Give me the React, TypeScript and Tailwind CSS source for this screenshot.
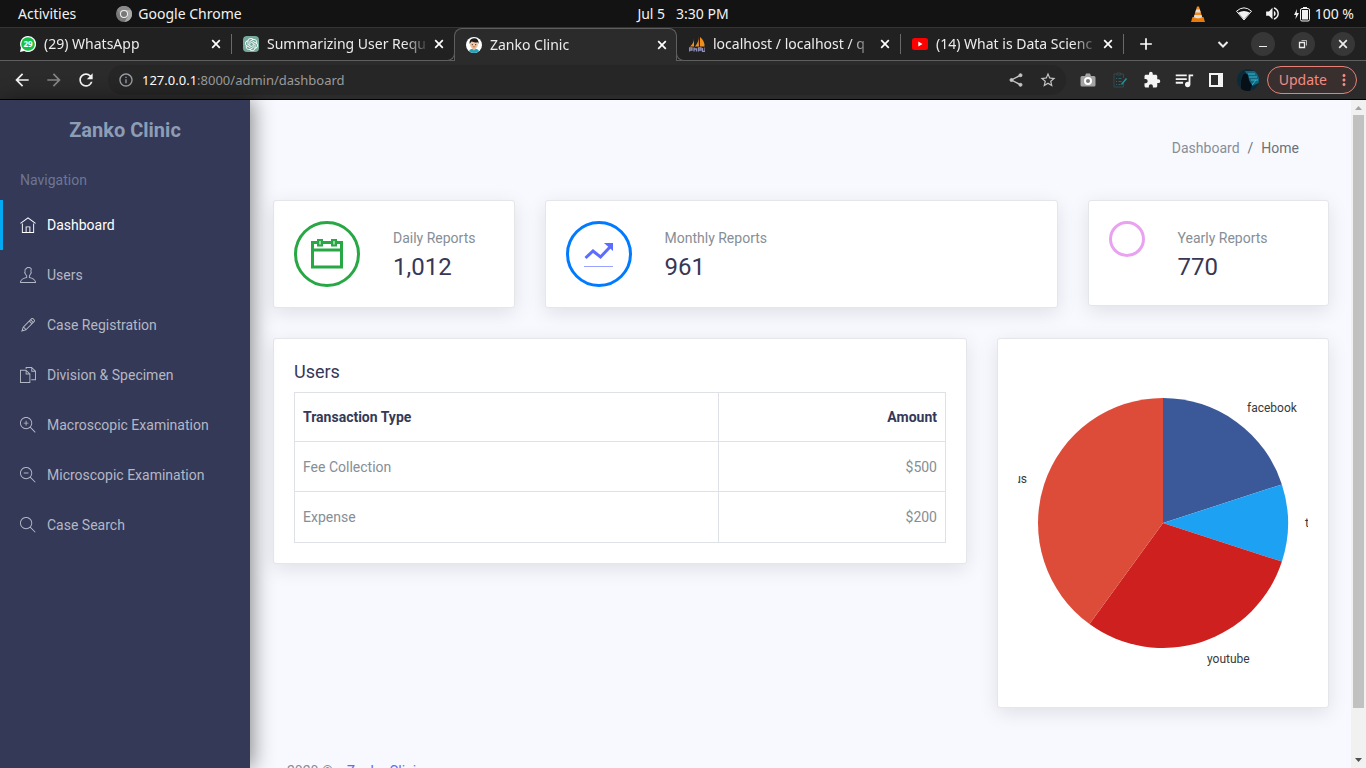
import type { ReactNode } from "react";
import {
  MdArrowBack,
  MdArrowForward,
  MdRefresh,
  MdInfoOutline,
  MdStarBorder,
  MdExtension,
  MdQueueMusic,
  MdMoreVert,
  MdAdd,
  MdVolumeUp,
} from "react-icons/md";
import { TfiHome, TfiUser, TfiPencil, TfiFiles, TfiZoomIn, TfiZoomOut, TfiSearch } from "react-icons/tfi";
import { SiOpenai } from "react-icons/si";

function ChromeIcon() {
  return (
    <svg viewBox="0 0 16 16" className="size-4" aria-hidden="true">
      <circle cx="8" cy="8" r="8" fill="#777" />
      <path d="M8 4h7A8 8 0 0 1 8.500 16L12 10z" fill="#a9a9a9" />
      <path d="M1 4a8 8 0 0 1 14 0H8L4.500 10z" fill="#8a8a8a" />
      <circle cx="8" cy="8" r="4" fill="#f0f0f0" />
      <circle cx="8" cy="8" r="3" fill="#777" />
    </svg>
  );
}

function VlcIcon() {
  return (
    <svg viewBox="0 0 16 16" className="size-4" aria-hidden="true">
      <path d="M2.500 11h11l1.500 5H1z" fill="#e87a05" />
      <path d="M7 .5h2l3.500 11.500q-4.500 2-9 0z" fill="#f08a1a" />
      <path d="M6.200 3.500h3.600l.9 3H5.300zM4.500 9h7l.7 2.300q-4.200 1.700-8.400 0z" fill="#dedede" />
    </svg>
  );
}

function BatteryIcon() {
  return (
    <svg viewBox="0 0 18 16" className="h-4 w-[18px]" aria-hidden="true">
      <path d="M4 3 1 9h2l-.5 4L6 7H3.700z" fill="#f2f2f2" />
      <rect x="7.500" y="2.500" width="9" height="12.500" rx="1.500" fill="none" stroke="#f2f2f2" />
      <rect x="10" y="1" width="4" height="2" fill="#f2f2f2" />
      <rect x="9" y="4" width="6" height="9.500" fill="#f2f2f2" />
    </svg>
  );
}

function WifiIcon() {
  return (
    <svg viewBox="0 0 16 16" className="size-4" aria-hidden="true">
      <path d="M.5 5.200Q8-1.500 15.500 5.200L8 14z" fill="none" stroke="#f2f2f2" />
      <path d="M2.300 6.500Q8 3.500 13.700 6.500L8 13.500z" fill="#f2f2f2" />
    </svg>
  );
}

function CrossIcon() {
  return (
    <svg viewBox="0 0 10 10" className="size-2.5" fill="none" stroke="currentColor" strokeWidth="1.700" aria-hidden="true">
      <path d="m1.200 1.200 7.600 7.600M8.800 1.200 1.200 8.800" />
    </svg>
  );
}

function WhatsAppIcon() {
  return (
    <svg viewBox="0 0 16 16" className="size-4" aria-hidden="true">
      <path d="M8 0a8 8 0 1 1-3.800 15L0 16l1-4.200A8 8 0 0 1 8 0z" fill="#fff" />
      <circle cx="8" cy="8" r="6.800" fill="#12c145" />
      <text x="8" y="10.800" textAnchor="middle" fontSize="8" fontWeight="700" fill="#fff" fontFamily="Noto Sans, sans-serif">
        29
      </text>
    </svg>
  );
}

function ChatIcon() {
  return (
    <span className="flex size-4 items-center justify-center rounded-sm bg-[#74a99b] text-white">
      <SiOpenai size={13} />
    </span>
  );
}

function DoctorIcon() {
  return (
    <svg viewBox="0 0 16 16" className="size-4" aria-hidden="true">
      <circle cx="8" cy="8" r="8" fill="#fff" />
      <path d="M3 14q1-2.500 5-2.500t5 2.500q-2 2-5 2t-5-2z" fill="#1ba6be" />
      <path d="M6.500 10h3v2.500L8 13.500l-1.500-1z" fill="#e9ac84" />
      <ellipse cx="8" cy="7.500" rx="4" ry="4.300" fill="#f3c6a0" />
      <path d="M3.500 7Q3 1.500 8 1.300q5-.1 4.600 5.700l-1-1.800q-3.500.6-6-.6z" fill="#1d1d1d" />
      <circle cx="6.300" cy="7.700" r=".6" fill="#333" />
      <circle cx="9.700" cy="7.700" r=".6" fill="#333" />
      <path d="M6.700 9.800h2.600" stroke="#9c4c35" strokeWidth=".7" />
    </svg>
  );
}

function PhpMyAdminIcon() {
  return (
    <svg viewBox="0 0 16 16" className="size-4" aria-hidden="true">
      <path d="M5 2.500Q5 7 1 10.500h4zM9.500 0Q10 6 6 10.500h4zM11 1q5 4 4.500 9.500H11z" fill="#f18e1c" />
      <path
        d="M.5 15.500V12H3v2H.5M5 15.500V11.500M5 13h2.500v2.500M9.500 15.500V12h2.500v2H9.500M13.500 12v3.500H16V11.500"
        fill="none"
        stroke="#8f8fb8"
        strokeWidth="1.300"
      />
    </svg>
  );
}

function YouTubeIcon() {
  return (
    <svg viewBox="0 0 16 16" className="size-4" aria-hidden="true">
      <rect y="2" width="16" height="12" rx="2.500" fill="#f00" />
      <path d="M6.300 5.600v4.800L10.500 8z" fill="#fff" />
    </svg>
  );
}

type Tab = { title: string; icon: ReactNode; active?: boolean };

const tabs: Tab[] = [
  { title: "(29) WhatsApp", icon: <WhatsAppIcon /> },
  { title: "Summarizing User Requ", icon: <ChatIcon /> },
  { title: "Zanko Clinic", icon: <DoctorIcon />, active: true },
  { title: "localhost / localhost / q", icon: <PhpMyAdminIcon /> },
  { title: "(14) What is Data Scienc", icon: <YouTubeIcon /> },
];

function SystemBar() {
  return (
    <header className="grid h-7 shrink-0 grid-cols-[1fr_auto_1fr] items-center border-b border-[#343434] bg-[#131313] text-[#f2f2f2]">
      <div className="flex items-center gap-10 pl-[18px]">
        <button type="button">Activities</button>
        <button type="button" className="flex items-center gap-1.5">
          <ChromeIcon />
          Google Chrome
        </button>
      </div>
      <button type="button" className="whitespace-pre">
        Jul 5   3:30 PM
      </button>
      <div className="flex items-center justify-end gap-3 pr-3">
        <span className="mr-[18px]">
          <VlcIcon />
        </span>
        <WifiIcon />
        <MdVolumeUp size={17} />
        <span className="flex items-center gap-1">
          <BatteryIcon />
          100 %
        </span>
      </div>
    </header>
  );
}

function TabItem({ tab, divided }: { tab: Tab; divided: boolean }) {
  const frame = tab.active
    ? "z-10 rounded-t-lg border-x border-t border-[#5f5f5f] bg-[#2b2b2b] pl-[11px] pr-[9px]"
    : "border-b border-[#5f5f5f] pl-3 pr-2.5";
  return (
    <div className={`relative flex w-[223px] items-center ${frame}`}>
      {divided && <span className="absolute left-0 top-1.5 h-5 w-px bg-[#6a6a6a]" />}
      {tab.active && (
        <>
          <span className="absolute -left-2 bottom-0 size-2 rounded-br-lg border-b border-r border-[#5f5f5f] bg-[#212121]" />
          <span className="absolute -right-2 bottom-0 size-2 rounded-bl-lg border-b border-l border-[#5f5f5f] bg-[#212121]" />
        </>
      )}
      {tab.icon}
      <span className="ml-2 flex-1 overflow-hidden whitespace-nowrap [mask-image:linear-gradient(to_right,black_84%,transparent)]">
        {tab.title}
      </span>
      <button type="button" aria-label={`Close ${tab.title}`} className="ml-1 text-white">
        <CrossIcon />
      </button>
    </div>
  );
}

function TabStrip() {
  return (
    <div className="flex h-[33px] shrink-0 bg-[#212121] text-[#ececec]">
      <div className="w-2 border-b border-[#5f5f5f]" />
      {tabs.map((tab, i) => (
        <TabItem key={tab.title} tab={tab} divided={i === 1 || i === 4} />
      ))}
      <div className="flex flex-1 items-center border-b border-[#5f5f5f] pr-[11px]">
        <span className="h-5 w-px bg-[#6a6a6a]" />
        <button type="button" aria-label="New tab" className="ml-3 text-white">
          <MdAdd size={20} />
        </button>
        <div className="ml-auto flex items-center gap-4">
          <button type="button" aria-label="Search tabs" className="flex size-6 items-center justify-center">
            <svg viewBox="0 0 12 12" className="size-3" fill="none" stroke="currentColor" strokeWidth="2">
              <path d="M1.500 4 6 8.500 10.500 4" />
            </svg>
          </button>
          <button type="button" aria-label="Minimize" className="flex size-6 items-center justify-center rounded-full bg-[#373737]">
            <svg viewBox="0 0 12 12" className="size-3" stroke="currentColor">
              <path d="M2 8.500h8" />
            </svg>
          </button>
          <button type="button" aria-label="Restore" className="flex size-6 items-center justify-center rounded-full bg-[#373737]">
            <svg viewBox="0 0 12 12" className="size-3" fill="none" stroke="currentColor">
              <path d="M2.500 4.500h5v5h-5z" strokeWidth="1.300" />
              <path d="M4.500 2.500h5v5" opacity=".7" />
            </svg>
          </button>
          <button type="button" aria-label="Close window" className="flex size-6 items-center justify-center rounded-full bg-[#373737]">
            <CrossIcon />
          </button>
        </div>
      </div>
    </div>
  );
}

function ToolButton({ label, children }: { label: string; children: ReactNode }) {
  return (
    <button type="button" aria-label={label} className="flex size-8 shrink-0 items-center justify-center">
      {children}
    </button>
  );
}

function Toolbar() {
  return (
    <div className="flex h-[39px] shrink-0 items-center border-b border-black bg-[#2b2b2b] pl-1.5 pr-[9px] text-[#f4f4f4]">
      <ToolButton label="Back">
        <MdArrowBack size={20} />
      </ToolButton>
      <ToolButton label="Forward">
        <MdArrowForward size={20} className="text-[#858585]" />
      </ToolButton>
      <ToolButton label="Reload">
        <MdRefresh size={20} />
      </ToolButton>
      <div className="ml-1.5 mr-1.5 flex h-[30px] flex-1 items-center rounded-full bg-[#262626] pl-2.5 pr-0.5 text-[#c4c4c4]">
        <MdInfoOutline size={16} className="text-[#9aa0a6]" />
        <a href="#address" className="ml-2 flex-1 text-[13px] text-[#9b9b9b]">
          <span className="text-white">127.0.0.1</span>:8000/admin/dashboard
        </a>
        <ToolButton label="Share">
          <svg viewBox="0 0 14 14" className="size-3.5" fill="currentColor" stroke="currentColor">
            <path d="M11.500 2.200 2.500 7l9 4.800" fill="none" strokeWidth="1.400" />
            <circle cx="11.500" cy="2.200" r="1.500" />
            <circle cx="2.500" cy="7" r="1.500" />
            <circle cx="11.500" cy="11.800" r="1.500" />
          </svg>
        </ToolButton>
        <ToolButton label="Bookmark">
          <MdStarBorder size={18} />
        </ToolButton>
      </div>
      <ToolButton label="Screenshot">
        <svg viewBox="0 0 16 14" className="h-3.5 w-4">
          <path d="M2 3h3l1-2.500h4L11 3h3q1.500 0 1.500 1.500v7.500q0 1.500-1.500 1.500H2Q.5 13.500.5 12V4.500Q.5 3 2 3z" fill="#a3a3a3" />
          <circle cx="8" cy="8" r="3" fill="#777" stroke="#fff" strokeWidth="2" />
        </svg>
      </ToolButton>
      <ToolButton label="Tasks">
        <svg viewBox="0 0 16 16" className="size-4" fill="none">
          <path d="M5 2H2v13h9.500V11M11.500 6V2h-3M5 1h3.500v2H5z" stroke="#35494d" />
          <path d="M4 6.500h1M6.500 6.500h3M4 9.500h1M6.500 9.500h3M4 12.500h1M6.500 12.500h2" stroke="#2b6468" />
          <path d="m9.500 12.500 5-6" stroke="#18959b" strokeWidth="1.500" />
        </svg>
      </ToolButton>
      <ToolButton label="Extensions">
        <MdExtension size={18} />
      </ToolButton>
      <ToolButton label="Media">
        <MdQueueMusic size={22} />
      </ToolButton>
      <ToolButton label="Side panel">
        <svg viewBox="0 0 14 14" className="size-3.5" fill="#f4f4f4">
          <path fillRule="evenodd" d="M0 0h14v14H0zM2 2v10h7V2z" />
        </svg>
      </ToolButton>
      <ToolButton label="Profile">
        <svg viewBox="0 0 22 22" className="size-[22px] rounded-full">
          <rect width="22" height="22" fill="#0c2a38" />
          <path d="M8 2h14v12l-7 3z" fill="#14667d" />
          <path d="M11 5h7M12 8h8M14 11h7M15 16l4-5" stroke="#38b4cf" />
          <path d="M4 22V12l2-6q3-3 5 0l1 6 3 4-2 6z" fill="#070f17" />
        </svg>
      </ToolButton>
      <button
        type="button"
        className="ml-[3px] flex h-7 items-center gap-2 rounded-full border border-[#e88076] bg-[#3a2f2f] pl-[11px] pr-[3px] text-[#f28b82]"
      >
        Update
        <MdMoreVert size={18} />
      </button>
    </div>
  );
}

const navItems = [
  { label: "Dashboard", icon: TfiHome, active: true },
  { label: "Users", icon: TfiUser },
  { label: "Case Registration", icon: TfiPencil },
  { label: "Division & Specimen", icon: TfiFiles },
  { label: "Macroscopic Examination", icon: TfiZoomIn },
  { label: "Microscopic Examination", icon: TfiZoomOut },
  { label: "Case Search", icon: TfiSearch },
];

function Sidebar() {
  return (
    <aside className="z-10 w-[250px] shrink-0 bg-[#343957] shadow-[3px_0_20px_rgba(0,0,0,0.45)]">
      <h1 className="pt-[15px] text-center text-xl leading-[30px] font-bold text-[#8d9db6]">Zanko Clinic</h1>
      <p className="px-5 pt-[25px] pb-[10px] leading-5 text-[#6d7693]">Navigation</p>
      <nav>
        {navItems.map(({ label, icon: Icon, active }) => (
          <a
            key={label}
            href="#nav"
            className={`flex h-[50px] items-center gap-[11px] border-l-[3px] pl-[17px] ${
              active ? "border-[#03a9f3] text-white" : "border-transparent text-[#b4b7c4]"
            }`}
          >
            <Icon size={16} />
            {label}
          </a>
        ))}
      </nav>
    </aside>
  );
}

function Card({ className, children }: { className: string; children: ReactNode }) {
  return (
    <section
      className={`rounded-[3px] border border-[#e5e6ea] bg-white p-5 shadow-[0_5px_20px_rgba(0,0,0,0.1)] ${className}`}
    >
      {children}
    </section>
  );
}

function StatCard({ className, label, value, children }: { className: string; label: string; value: string; children: ReactNode }) {
  return (
    <Card className={className}>
      <div className="flex items-start gap-[33px]">
        {children}
        <div className="pt-1 pb-0.5">
          <p className="leading-[26px] text-[#868e96]">{label}</p>
          <p className="text-2xl leading-8 text-[#373757]">{value}</p>
        </div>
      </div>
    </Card>
  );
}

function PieChart() {
  return (
    <svg viewBox="0 0 290 328" className="block w-full" fontSize="12" fill="#373a3c" role="img" aria-label="Traffic sources">
      <path d="M145 164V39A125 125 0 0 1 263.900 125.400z" fill="#3b5998" />
      <path d="M145 164 263.900 125.400A125 125 0 0 1 263.900 202.600z" fill="#1da1f2" />
      <path d="M145 164 263.900 202.600A125 125 0 0 1 71.500 265.100z" fill="#cd201f" />
      <path d="M145 164 71.500 265.100A125 125 0 0 1 145 39z" fill="#dd4b39" />
      <text x="229" y="53">facebook</text>
      <text x="287" y="168">twitter</text>
      <text x="189" y="304">youtube</text>
      <text x="9" y="124" textAnchor="end">google plus</text>
    </svg>
  );
}

const cell = "border border-[#dee2e6] px-2";

function UsersTable() {
  return (
    <table className="w-full table-fixed border-collapse">
      <thead>
        <tr className="h-[49px] text-[#343957]">
          <th className={`w-[65.2%] text-left font-bold ${cell}`}>Transaction Type</th>
          <th className={`text-right font-bold ${cell}`}>Amount</th>
        </tr>
      </thead>
      <tbody className="text-[#868e96]">
        <tr className="h-[50px]">
          <td className={cell}>Fee Collection</td>
          <td className={`text-right ${cell}`}>$500</td>
        </tr>
        <tr className="h-[51px]">
          <td className={cell}>Expense</td>
          <td className={`text-right ${cell}`}>$200</td>
        </tr>
      </tbody>
    </table>
  );
}

function Dashboard() {
  return (
    <main className="min-w-0 flex-1 overflow-hidden bg-[#f8f9fe] pl-[23px] pr-[22px]">
      <nav aria-label="Breadcrumb" className="flex justify-end gap-2 pt-9 pr-[30px] pb-10 leading-6">
        <a href="#dashboard" className="text-[#868e96]">
          Dashboard
        </a>
        <span className="text-[#6c757d]">/</span>
        <span className="text-[#6b7178]">Home</span>
      </nav>
      <div className="grid grid-cols-12 items-start gap-[30px]">
        <StatCard className="col-span-3" label="Daily Reports" value="1,012">
          <div className="flex size-[66px] items-center justify-center rounded-full border-[3px] border-[#28a745]">
            <svg viewBox="0 0 32 30" className="h-[30px] w-8" fill="none" stroke="#28a745">
              <path d="M1.500 3.500h29v24.500h-29zM1.500 11h29" strokeWidth="3" />
              <path d="M7 1h4v5.500H7zM21 1h4v5.500h-4z" fill="#9bd6a8" strokeWidth="2" />
            </svg>
          </div>
        </StatCard>
        <StatCard className="col-span-6" label="Monthly Reports" value="961">
          <div className="flex size-[66px] items-center justify-center rounded-full border-[3px] border-[#007bff]">
            <svg viewBox="0 0 30 28" className="h-7 w-[30px]" fill="none" stroke="#5c6cff">
              <path d="m1.500 18 7.500-7 7.500 6L26 7" strokeWidth="3" />
              <path d="M20 3h9v8z" fill="#5c6cff" stroke="none" />
              <path d="M0 26.500h29" stroke="#9aa4ff" />
            </svg>
          </div>
        </StatCard>
        <StatCard className="col-span-3" label="Yearly Reports" value="770">
          <div className="size-9 rounded-full border-[3px] border-[#e8a2f0]" />
        </StatCard>
        <Card className="col-span-8">
          <h2 className="pb-2 pt-px text-lg leading-6 text-[#373757]">Users</h2>
          <UsersTable />
        </Card>
        <Card className="col-span-4">
          <PieChart />
        </Card>
      </div>
      <footer className="pt-[51px] pl-[14px] leading-6 whitespace-pre text-[#868e96]">
        2020 ©    <a href="#clinic" className="text-[#5c6cff]">Zanko Clinic</a>
      </footer>
    </main>
  );
}

function Scrollbar() {
  return (
    <div className="flex w-[15px] shrink-0 flex-col items-center bg-[#f1f1f1]" aria-hidden="true">
      <svg viewBox="0 0 15 15" className="size-[15px]" fill="#a3a3a3">
        <path d="M4 10h7L7.500 6z" />
      </svg>
      <div className="flex w-full flex-1 flex-col px-0.5">
        <div className="h-[93%] bg-[#c1c1c1]" />
      </div>
      <svg viewBox="0 0 15 15" className="size-[15px]" fill="#505050">
        <path d="M4 5h7L7.500 9z" />
      </svg>
    </div>
  );
}

export default function App() {
  return (
    <div className="flex h-screen flex-col overflow-hidden font-['Noto_Sans',sans-serif] text-sm">
      <SystemBar />
      <TabStrip />
      <Toolbar />
      <div className="flex min-h-0 flex-1 font-[Roboto,sans-serif]">
        <Sidebar />
        <Dashboard />
        <Scrollbar />
      </div>
    </div>
  );
}
